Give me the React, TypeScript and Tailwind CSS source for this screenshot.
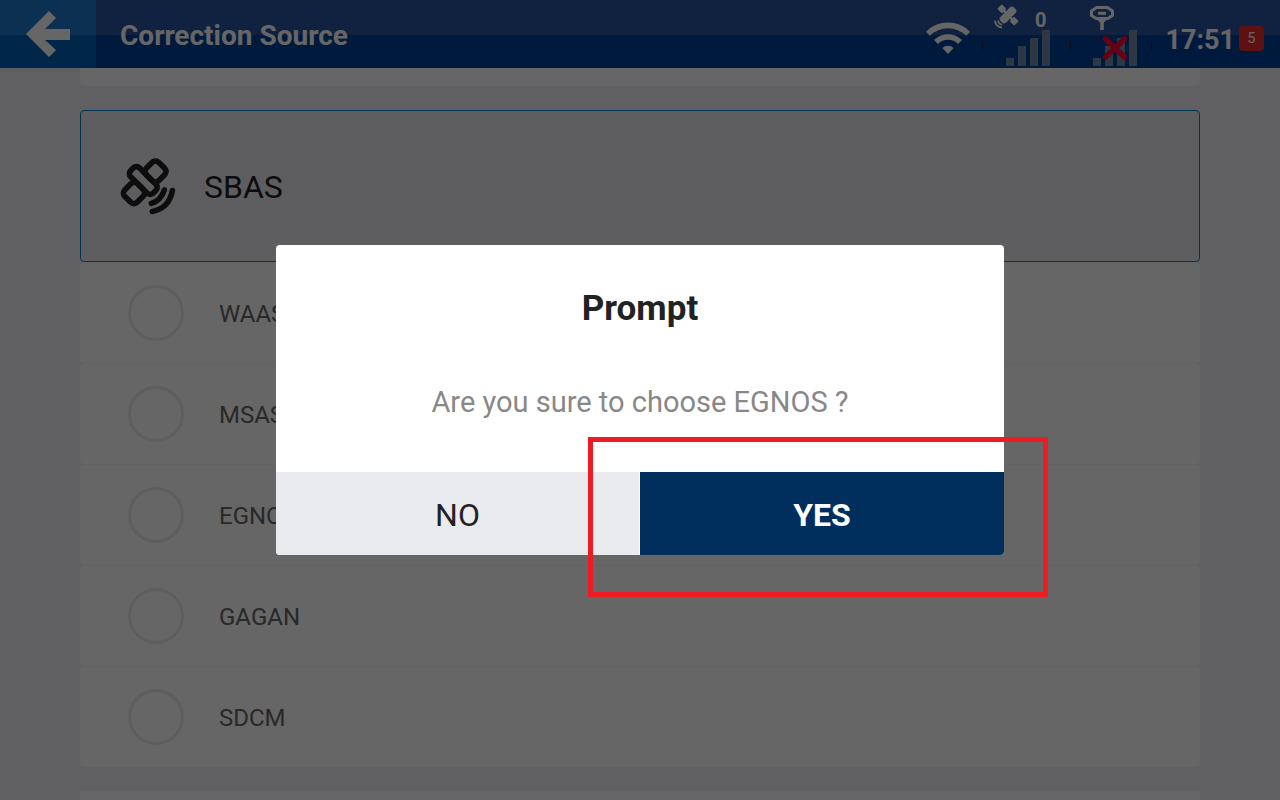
import { useState } from 'react'

const SOURCES = ['WAAS', 'MSAS', 'EGNOS', 'GAGAN', 'SDCM']

function BackIcon() {
  return (
    <svg width="44" height="46" viewBox="0 0 44 46" fill="#fff" aria-hidden="true">
      <path d="M23 0l7 7-11 11h25v11H19l11 10-7 7L0 23z" />
    </svg>
  )
}

function WifiIcon() {
  return (
    <svg width="44" height="34" viewBox="0 0 44 34" fill="none" stroke="#fff" strokeWidth="5.6" aria-hidden="true">
      <path d="M2 12.8a28 28 0 0 1 40 0" />
      <path d="M10 21a17 17 0 0 1 24 0" />
      <path d="M16.4 27a8 8 0 0 1 11.2 0L22 33z" fill="#fff" stroke="none" />
    </svg>
  )
}

function SatelliteSmallIcon() {
  return (
    <svg width="25" height="25" viewBox="0 0 25 25" fill="#fff" aria-hidden="true">
      <g transform="translate(14 11) rotate(-45)">
        <rect x="-9.5" y="-4" width="19" height="8" rx="3" />
        <rect x="-3.2" y="-12" width="6.4" height="6.6" rx="1" />
        <rect x="-3.2" y="5.4" width="6.4" height="6.6" rx="1" />
        <path d="M0-6v12" stroke="#fff" strokeWidth="2.4" />
      </g>
      <path d="M1 16.5a7 7 0 0 0 7 7M4.2 16.5a4 4 0 0 0 4 4" fill="none" stroke="#fff" strokeWidth="1.8" />
    </svg>
  )
}

function ReceiverIcon() {
  return (
    <svg width="24" height="25" viewBox="0 0 24 25" fill="none" stroke="#fff" strokeWidth="3" aria-hidden="true">
      <path d="M6.5 2.5h11l5 3.6v4.4l-4.6 3H6.1l-4.6-3V6.1z" />
      <path d="M8 8.3h8" />
      <path d="M6 13.5h12l-4.2 4V25h-3.6v-7.5z" fill="#fff" stroke="none" />
    </svg>
  )
}

function SignalBars({ lost = false }: { lost?: boolean }) {
  return (
    <svg width="44" height="36" viewBox="0 0 44 36" fill="#708cab" aria-hidden="true">
      <path d="M0 28h8v8H0zM12 16h8v20h-8zM24 8h8v28h-8zM36 0h8v36h-8z" />
      {lost && <path d="M12.5 9l19 18M31.5 9l-19 18" stroke="#ff0033" strokeWidth="5.6" strokeLinecap="round" />}
    </svg>
  )
}

function SatelliteIcon() {
  return (
    <svg width="56" height="57" viewBox="0 0 56 57" fill="none" stroke="#222" strokeWidth="5.6" strokeLinecap="round" aria-hidden="true">
      <g transform="translate(24.5 22) rotate(45)">
        <rect x="-16.5" y="-5" width="32" height="12.5" rx="4.5" />
        <rect x="-7" y="-22.5" width="17.5" height="17.5" rx="4.5" />
        <rect x="-7" y="7.5" width="17.5" height="18" rx="4.5" />
      </g>
      <path d="M31.4 45.4Q41 42.5 44.3 32" />
      <path d="M32.4 53.4Q49 50.5 52.4 32.6" />
    </svg>
  )
}

function Tick() {
  return <span className="mt-4 h-2 w-px bg-[#222]" />
}

function StatusBar() {
  return (
    <div className="flex h-full items-center pt-2 pr-4 text-white">
      <WifiIcon />
      <div className="flex w-6 justify-center">
        <Tick />
      </div>
      <div className="flex flex-col items-end self-end pb-0.5">
        <div className="flex w-14 items-start justify-between">
          <SatelliteSmallIcon />
          <span className="pt-1.5 pr-1 text-xl leading-5 font-bold">0</span>
        </div>
        <SignalBars />
      </div>
      <div className="flex w-10 justify-center">
        <Tick />
      </div>
      <div className="flex flex-col self-end pb-0.5">
        <ReceiverIcon />
        <div className="ml-[3px]">
          <SignalBars lost />
        </div>
      </div>
      <div className="flex w-7 justify-center">
        <Tick />
      </div>
      <time className="pt-1 text-[27px] leading-8 font-bold">17:51</time>
      <span className="ml-1 flex size-[25px] items-center justify-center rounded-sm bg-[#ee2c2c] text-sm">5</span>
    </div>
  )
}

function SourceRow({ name, checked, onSelect }: { name: string; checked: boolean; onSelect: () => void }) {
  return (
    <label className="flex h-[101px] items-center gap-[35px] rounded-sm border-t border-[#f4f4f4] bg-white px-12 text-2xl text-[#666]">
      <input
        type="radio"
        name="source"
        checked={checked}
        onChange={onSelect}
        className="size-14 appearance-none rounded-full border-3 border-[#ebebeb] checked:border-[#0073c8]"
      />
      <span className="pt-0.5">{name}</span>
    </label>
  )
}

function PromptDialog({ source, onClose }: { source: string; onClose: () => void }) {
  return (
    <div className="fixed inset-0 flex items-center justify-center bg-black/60">
      <div role="dialog" aria-modal="true" aria-labelledby="prompt-title" className="w-[728px] max-w-full rounded-sm bg-white text-center">
        <div className="px-8 pt-10 pb-12">
          <h2 id="prompt-title" className="text-[35px] leading-[48px] font-bold text-[#222]">Prompt</h2>
          <p className="mt-12 text-[29px] leading-[43px] text-[#888]">Are you sure to choose {source} ?</p>
        </div>
        <div className="grid h-[83px] grid-cols-2 text-[32px]">
          <button onClick={onClose} className="rounded-bl-sm border-r border-white bg-[#eaebef] pt-0.5 text-[#222]">NO</button>
          <div className="relative">
            <button onClick={onClose} className="size-full rounded-br-sm bg-[#002e5d] pt-0.5 font-bold text-white">YES</button>
            {/* highlight frame around the confirm button */}
            <div className="pointer-events-none absolute -top-[35px] -right-[44px] -bottom-[42px] -left-[52px] border-5 border-[#ed1c24]" />
          </div>
        </div>
      </div>
    </div>
  )
}

export default function App() {
  const [selected, setSelected] = useState('')
  const [open, setOpen] = useState(true)

  return (
    <div className="flex h-screen flex-col overflow-hidden bg-[#f0f0f5] font-[Roboto,sans-serif]">
      <header className="flex h-[68px] shrink-0 items-center justify-between bg-[linear-gradient(#28559f_35px,#00419b_35px)]">
        <div className="flex h-full items-center gap-6">
          <button
            aria-label="Back"
            className="flex h-full w-24 items-center justify-center bg-[linear-gradient(#2078cd_35px,#0062b9_35px)]"
          >
            <BackIcon />
          </button>
          <h1 className="pt-1 text-[28px] font-bold text-white">Correction Source</h1>
        </div>
        <StatusBar />
      </header>

      <main className="flex flex-1 flex-col gap-6 overflow-hidden px-20">
        <div className="h-[18px] shrink-0 rounded-b-sm bg-white" />
        <section className="shrink-0">
          <div className="flex h-[152px] items-center gap-7 rounded-sm border border-[#0082d2] bg-[#ebebf0] px-[39px] text-[32px] text-[#222]">
            <SatelliteIcon />
            <h2 className="pt-0.5">SBAS</h2>
          </div>
          {SOURCES.map((name) => (
            <SourceRow key={name} name={name} checked={selected === name} onSelect={() => setSelected(name)} />
          ))}
        </section>
        <div className="h-38 shrink-0 rounded-sm bg-white" />
      </main>

      {open && <PromptDialog source="EGNOS" onClose={() => setOpen(false)} />}
    </div>
  )
}
